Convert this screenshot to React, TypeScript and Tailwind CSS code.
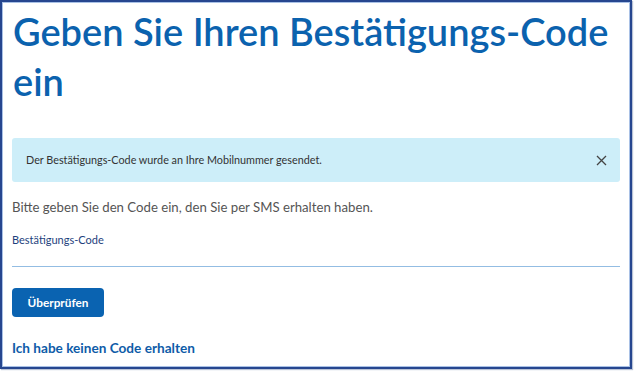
import React from "react";

const App = () => {
  return (
    <div className="w-[634px] h-[371px] bg-white font-['Lato','Liberation_Sans',sans-serif]">
      <div className="w-[632px] h-[369px] border-2 border-[#26468f] shadow-[1px_1px_1px_#b9c3d6]">
        <div className="h-full border border-[#a9c1e6] px-[9px] pt-[3px] flex flex-col">
          <h1 className="text-[#0b62ae] text-[38px] leading-[50px] font-semibold pl-[1px] pr-[4px]">
            Geben Sie Ihren Bestätigungs-Code ein
          </h1>

          <div className="mt-[32px] h-[44px] rounded-[3px] bg-[#cdeef9] flex items-center justify-between pl-[14px] pr-[13px]">
            <p className="text-[10.8px] text-[#333]">
              Der Bestätigungs-Code wurde an Ihre Mobilnummer gesendet.
            </p>
            <svg width="11" height="11" viewBox="0 0 11 11" className="text-[#444]">
              <path d="M1 1L10 10M10 1L1 10" stroke="currentColor" strokeWidth="1.3" />
            </svg>
          </div>

          <p className="mt-[15px] text-[13.2px] leading-[20px] text-[#555]">
            Bitte geben Sie den Code ein, den Sie per SMS erhalten haben.
          </p>

          <label className="mt-[15px] text-[11px] leading-[16px] text-[#1e3f7d]">Bestätigungs-Code</label>
          <div className="mt-[18px] h-px bg-[#93bde3]" />

          <div className="mt-[21px]">
            <button className="h-[29px] w-[92px] rounded-[4px] bg-[#0a63b1] text-white text-[11.8px] font-bold">
              Überprüfen
            </button>
          </div>

          <a className="mt-[21px] text-[13.6px] leading-[20px] font-bold text-[#0f5ca8]">Ich habe keinen Code erhalten</a>
        </div>
      </div>
    </div>
  );
};

export default App;
